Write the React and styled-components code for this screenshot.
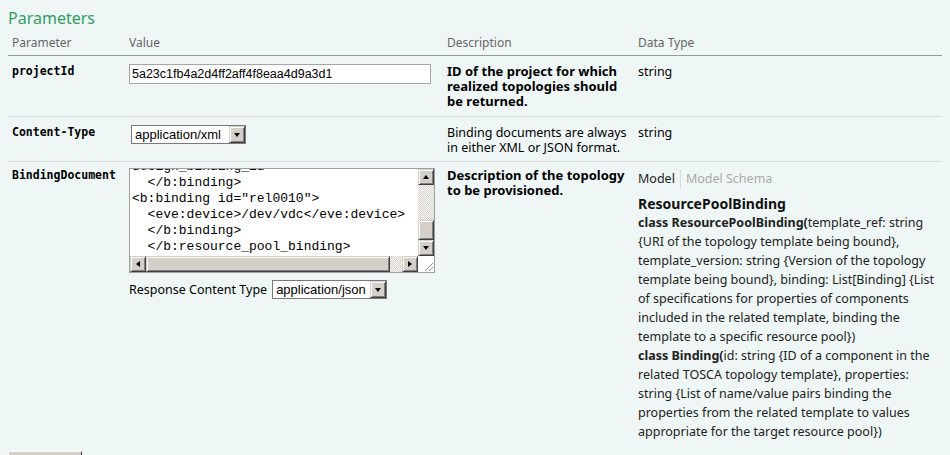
import React, { useEffect, useRef } from "react";
import styled, { createGlobalStyle } from "styled-components";

const GlobalStyle = createGlobalStyle`
  html, body {
    overflow: hidden;
  }
  body {
    margin: 8px;
    background: #eff7f6;
    font-family: "Noto Sans", "Open Sans", sans-serif;
    color: #000;
  }
`;

const Title = styled.h2`
  margin: 0;
  font-size: 16px;
  line-height: 20px;
  font-weight: normal;
  color: #2f9e60;
`;

const Table = styled.div`
  width: 934px;
`;

const Row = styled.div`
  display: grid;
  grid-template-columns: 117px 318px 191px 1fr;
  padding: ${(p) => p.$pt}px 0 ${(p) => p.$pb}px;
  border-bottom: ${(p) => (p.$head ? "1px solid #9a9a9a" : p.$last ? "none" : "1px solid #d8dcdc")};
`;

const Cell = styled.div`
  padding: 0 4px;
  font-size: ${(p) => (p.$bold ? "13px" : p.$head ? "12px" : "12.5px")};
  line-height: ${(p) => (p.$head ? "16px" : "15px")};
  color: ${(p) => (p.$head ? "#666" : "#000")};
  font-weight: ${(p) => (p.$bold ? "bold" : "normal")};
  white-space: nowrap;
`;

const Name = styled(Cell)`
  font-family: "DejaVu Sans Mono", monospace;
  font-size: 11.5px;
  line-height: 14px;
  font-weight: bold;
`;

const TextInput = styled.input`
  box-sizing: border-box;
  width: 302px;
  height: 20px;
  margin: 0;
  padding: 1px 2px;
  border: 1px solid #a6a6a6;
  background: #fff;
  font-family: "Liberation Sans", Arial, sans-serif;
  font-size: 12.5px;
  color: #000;
  outline: none;
`;

const SelectBox = styled.div`
  display: inline-flex;
  box-sizing: border-box;
  width: 115px;
  height: 19px;
  margin-left: ${(p) => p.$indent || 0}px;
  border: 1px solid #7a7a7a;
  background: #fff;
`;

const NativeSelect = styled.select`
  appearance: none;
  flex: 1;
  min-width: 0;
  margin: 0;
  padding: 0 3px;
  border: none;
  background: transparent;
  font-family: "Liberation Sans", Arial, sans-serif;
  font-size: 13px;
  color: #000;
  outline: none;
`;

const Bevel = styled.span`
  display: flex;
  align-items: center;
  justify-content: center;
  box-sizing: border-box;
  flex: none;
  width: ${(p) => p.$w || 16}px;
  height: ${(p) => (p.$h ? `${p.$h}px` : "auto")};
  background: #d4d0c8;
  border: 1px solid;
  border-color: #d4d0c8 #404040 #404040 #d4d0c8;
  box-shadow: inset 1px 1px #fff, inset -1px -1px #808080;
`;

const Triangle = styled.span`
  width: 0;
  height: 0;
  border-style: solid;
  border-color: transparent;
  ${(p) =>
    ({
      down: "border-width: 4px 3.5px 0; border-top-color: #000;",
      up: "border-width: 0 3.5px 4px; border-bottom-color: #000;",
      left: "border-width: 3.5px 4px 3.5px 0; border-right-color: #000;",
      right: "border-width: 3.5px 0 3.5px 4px; border-left-color: #000;",
    })[p.$dir]}
`;

const CodeFrame = styled.div`
  display: grid;
  grid-template-columns: 1fr 16px;
  grid-template-rows: 1fr 16px;
  box-sizing: border-box;
  width: 306px;
  height: 105px;
  border: 1px solid #a0a0a0;
  background: #fff;
`;

const CodeArea = styled.textarea`
  display: block;
  box-sizing: border-box;
  width: 100%;
  height: 100%;
  margin: 0;
  padding: 3px 2px 1px;
  border: none;
  background: #fff;
  font-family: "Liberation Mono", "Courier New", monospace;
  font-size: 13px;
  line-height: 16px;
  color: #000;
  white-space: pre;
  overflow: hidden;
  resize: none;
  outline: none;
`;

const ScrollBar = styled.div`
  display: flex;
  flex-direction: ${(p) => (p.$vertical ? "column" : "row")};
`;

const Track = styled.div`
  flex: 1;
  display: flex;
  flex-direction: ${(p) => (p.$vertical ? "column" : "row")};
  justify-content: ${(p) => (p.$end ? "flex-end" : "flex-start")};
  background: repeating-conic-gradient(#d4d0c8 0 25%, #fff 0 50%) 0 0 / 2px 2px;
`;

const Corner = styled.div`
  display: flex;
  align-items: flex-end;
  justify-content: flex-end;
  background: #fff;
`;

const ResponseRow = styled.div`
  display: flex;
  align-items: center;
  gap: 5px;
  margin-top: 7px;
  font-size: 12.5px;
  color: #000;
`;

const Tabs = styled.div`
  display: flex;
  margin-top: 1px;
  font-size: 12.5px;
  line-height: 20px;
`;

const Tab = styled.span`
  padding: ${(p) => (p.$active ? "0 5px 0 0" : "0 0 0 5px")};
  color: ${(p) => (p.$active ? "#222" : "#aaa")};
  border-right: ${(p) => (p.$active ? "1px solid #dcdcdc" : "none")};
`;

const ModelTitle = styled.div`
  margin-top: 6px;
  font-size: 14px;
  line-height: 18px;
  font-weight: bold;
  color: #111;
`;

const ModelBody = styled.div`
  font-size: 12.5px;
  line-height: 19px;
  color: #222;
  white-space: nowrap;
`;

const TryButton = styled.button`
  display: block;
  box-sizing: border-box;
  width: 74px;
  height: 22px;
  margin-top: 4px;
  padding: 0;
  background: #d4d0c8;
  border: 1px solid;
  border-color: #fff #404040 #404040 #fff;
  font-family: "Liberation Sans", Arial, sans-serif;
  font-size: 12px;
`;

const xml = [
  '<?xml version="1.0" encoding="UTF-8"?>',
  "<b:resource_pool_binding",
  '  xmlns:b="urn:eve:binding"',
  '  xmlns:eve="urn:eve:device">',
  "  <b:template_ref>web</b:template_ref>",
  "  <b:template_version>1.0",
  "  </b:template_version>",
  '<b:binding id="rel0001">',
  "  <eve:flavor>m1.small</eve:flavor>",
  "  <eve:design_binding_id>",
  "design_binding_id>",
  "  </b:binding>",
  '<b:binding id="rel0010">',
  "  <eve:device>/dev/vdc</eve:device>",
  "  </b:binding>",
  "  </b:resource_pool_binding>",
].join("\n");

function Select({ value, indent }) {
  return (
    <SelectBox $indent={indent}>
      <NativeSelect defaultValue={value}>
        <option>{value}</option>
      </NativeSelect>
      <Bevel>
        <Triangle $dir="down" />
      </Bevel>
    </SelectBox>
  );
}

function ResizeGrip() {
  return (
    <svg width="12" height="12" viewBox="0 0 12 12">
      <path d="M11 3 L3 11 M11 7 L7 11" stroke="#909090" strokeWidth="1" />
    </svg>
  );
}

function CodeEditor({ value }) {
  const areaRef = useRef(null);

  useEffect(() => {
    const el = areaRef.current;
    if (el) el.scrollTop = el.scrollHeight;
  }, []);

  return (
    <CodeFrame>
      <CodeArea ref={areaRef} defaultValue={value} spellCheck={false} />
      <ScrollBar $vertical>
        <Bevel $h={16}>
          <Triangle $dir="up" />
        </Bevel>
        <Track $vertical $end>
          <Bevel $h={20} />
        </Track>
        <Bevel $h={16}>
          <Triangle $dir="down" />
        </Bevel>
      </ScrollBar>
      <ScrollBar>
        <Bevel>
          <Triangle $dir="left" />
        </Bevel>
        <Track>
          <Bevel $w={244} />
        </Track>
        <Bevel>
          <Triangle $dir="right" />
        </Bevel>
      </ScrollBar>
      <Corner>
        <ResizeGrip />
      </Corner>
    </CodeFrame>
  );
}

function App() {
  return (
    <>
      <GlobalStyle />
      <Title>Parameters</Title>
      <Table>
        <Row $head $pt={7} $pb={4}>
          <Cell $head>Parameter</Cell>
          <Cell $head>Value</Cell>
          <Cell $head>Description</Cell>
          <Cell $head>Data Type</Cell>
        </Row>

        <Row $pt={8} $pb={7}>
          <Name>projectId</Name>
          <Cell>
            <TextInput defaultValue="5a23c1fb4a2d4ff2aff4f8eaa4d9a3d1" />
          </Cell>
          <Cell $bold>
            ID of the project for which
            <br />
            realized topologies should
            <br />
            be returned.
          </Cell>
          <Cell>string</Cell>
        </Row>

        <Row $pt={8} $pb={6}>
          <Name>Content-Type</Name>
          <Cell>
            <Select value="application/xml" indent={2} />
          </Cell>
          <Cell>
            Binding documents are always
            <br />
            in either XML or JSON format.
          </Cell>
          <Cell>string</Cell>
        </Row>

        <Row $last $pt={6} $pb={6}>
          <Name>BindingDocument</Name>
          <Cell>
            <CodeEditor value={xml} />
            <ResponseRow>
              Response Content Type
              <Select value="application/json" />
            </ResponseRow>
          </Cell>
          <Cell $bold>
            Description of the topology
            <br />
            to be provisioned.
          </Cell>
          <Cell>
            <Tabs>
              <Tab $active>Model</Tab>
              <Tab>Model Schema</Tab>
            </Tabs>
            <ModelTitle>ResourcePoolBinding</ModelTitle>
            <ModelBody>
              <b>class ResourcePoolBinding(</b>template_ref: string
              <br />
              {"{URI of the topology template being bound},"}
              <br />
              {"template_version: string {Version of the topology"}
              <br />
              {"template being bound}, binding: List[Binding] {List"}
              <br />
              of specifications for properties of components
              <br />
              included in the related template, binding the
              <br />
              {"template to a specific resource pool})"}
              <br />
              <b>class Binding(</b>
              {"id: string {ID of a component in the"}
              <br />
              {"related TOSCA topology template}, properties:"}
              <br />
              {"string {List of name/value pairs binding the"}
              <br />
              properties from the related template to values
              <br />
              {"appropriate for the target resource pool})"}
            </ModelBody>
          </Cell>
        </Row>
      </Table>
      <TryButton>Try it out!</TryButton>
    </>
  );
}

export default App;
